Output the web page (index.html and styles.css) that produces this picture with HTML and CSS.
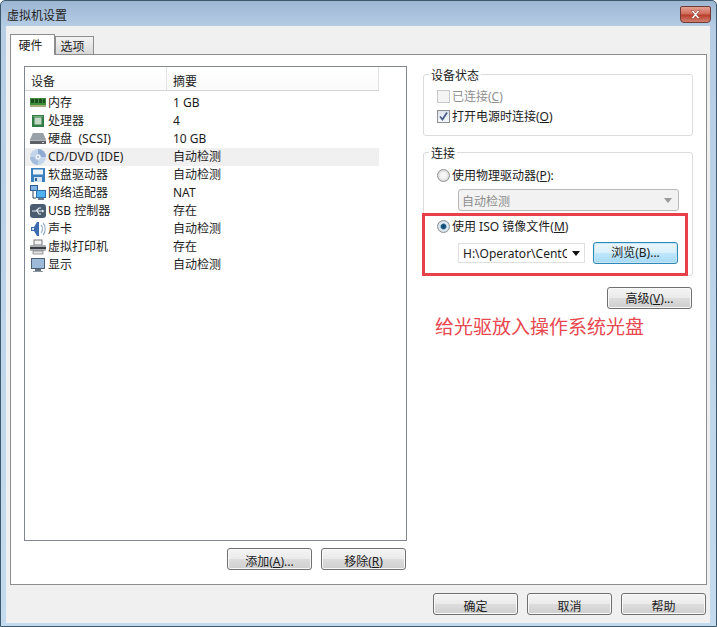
FILE: index.html
```html
<!DOCTYPE html>
<html lang="zh">
<head>
<meta charset="utf-8">
<title>虚拟机设置</title>
<link rel="stylesheet" href="styles.css">
</head>
<body>
<div class="window">
  <header class="titlebar">
    <span class="title">虚拟机设置</span>
    <button class="close" aria-label="关闭"><svg width="13" height="11" viewBox="0 0 13 11"><path d="M2 1.500h2.500L6.500 4l2-2.500H11L7.800 5.500 11 9.500H8.500l-2-2.500-2 2.500H2l3.200-4z" fill="#fff" stroke="#8a3a30" stroke-width=".6"/></svg></button>
  </header>
  <div class="client">
    <div class="tabs">
      <div class="tab active">硬件</div>
      <div class="tab">选项</div>
    </div>
    <main class="panel">
      <section class="left">
        <div class="list">
          <div class="list-head"><span class="c1">设备</span><span class="c2">摘要</span></div>
          <div class="row"><span class="ico"><svg width="16" height="16" viewBox="0 0 16 16"><rect x="0" y="3" width="16" height="7" fill="#3f8f3a"/><rect x="1" y="4" width="3" height="4" fill="#1f4d22"/><rect x="5" y="4" width="3" height="4" fill="#1f4d22"/><rect x="9" y="4" width="3" height="4" fill="#1f4d22"/><rect x="13" y="4" width="2" height="4" fill="#1f4d22"/><rect x="0" y="10" width="16" height="2" fill="#a8ad7c"/></svg></span><span class="name">内存</span><span class="val">1 GB</span></div>
          <div class="row"><span class="ico"><svg width="16" height="16" viewBox="0 0 16 16"><rect x="2" y="2" width="12" height="12" fill="#2f7d46"/><rect x="4.500" y="4.500" width="7" height="7" fill="#c4d8c4"/><path d="M3 3h10v1H3z" fill="#6fae78"/></svg></span><span class="name">处理器</span><span class="val">4</span></div>
          <div class="row"><span class="ico"><svg width="16" height="16" viewBox="0 0 16 16"><path d="M3 2h10l3 7v4H0V9z" fill="#b4b8bd"/><path d="M3 2h10l3 7H0z" fill="#9aa0a7"/><rect x="0" y="10" width="16" height="3" fill="#5c6066"/><rect x="12" y="11" width="2" height="1" fill="#cfd3d6"/></svg></span><span class="name spaced">硬盘 (SCSI)</span><span class="val">10 GB</span></div>
          <div class="row selected"><span class="ico"><svg width="16" height="16" viewBox="0 0 16 16"><circle cx="8" cy="8" r="8" fill="#c3d5ea"/><path d="M8 0A8 8 0 0 1 16 8H11A3 3 0 0 0 8 5z" fill="#8fabd2"/><path d="M8 16A8 8 0 0 1 0 8H5A3 3 0 0 0 8 11z" fill="#a6bddb"/><circle cx="8" cy="8" r="2.500" fill="#eef4fa"/><circle cx="8" cy="8" r="1" fill="#9fb2ca"/></svg></span><span class="name">CD/DVD (IDE)</span><span class="val">自动检测</span></div>
          <div class="row"><span class="ico"><svg width="16" height="16" viewBox="0 0 16 16"><rect x="1" y="1" width="14" height="14" fill="#3a80c0"/><rect x="3" y="2.500" width="10" height="5" fill="#eaf2fa"/><rect x="4" y="10" width="8" height="5" fill="#d5e2f0"/><rect x="5" y="11" width="2" height="3" fill="#2f5f90"/></svg></span><span class="name">软盘驱动器</span><span class="val">自动检测</span></div>
          <div class="row"><span class="ico"><svg width="16" height="16" viewBox="0 0 16 16"><rect x="0" y="0" width="8" height="6" fill="#2d5a8a"/><rect x="1" y="1" width="6" height="4" fill="#7fb4e6"/><path d="M3 6v7h3" fill="none" stroke="#33465c"/><rect x="6" y="5" width="10" height="8" fill="#2f6ea8"/><rect x="7" y="6" width="8" height="6" fill="#4fb2ee"/><rect x="8" y="13" width="6" height="2" fill="#6c7c8c"/></svg></span><span class="name">网络适配器</span><span class="val">NAT</span></div>
          <div class="row"><span class="ico"><svg width="16" height="16" viewBox="0 0 16 16"><rect x="0" y="1" width="16" height="14" rx="3" fill="#4a5c70"/><path d="M2 8h11M6 8l3-3h2M7 8l2 3h2" fill="none" stroke="#e8eef4" stroke-width="1.200"/><path d="M12 6.500l2.500 1.500L12 9.500z" fill="#e8eef4"/></svg></span><span class="name">USB 控制器</span><span class="val">存在</span></div>
          <div class="row"><span class="ico"><svg width="16" height="16" viewBox="0 0 16 16"><path d="M1 6h3l3-5h2v14H7L4 10H1z" fill="#3d6db0"/><path d="M2 7h2v2H2z" fill="#cfe0f3"/><path d="M11 4c2 2 2 6 0 8M13 2c3 3 3 9 0 12" fill="none" stroke="#8fa9c8" stroke-width="1.100"/></svg></span><span class="name">声卡</span><span class="val">自动检测</span></div>
          <div class="row"><span class="ico"><svg width="16" height="16" viewBox="0 0 16 16"><rect x="4" y="1" width="8" height="5" fill="#f4f4f4" stroke="#777"/><rect x="0" y="6" width="16" height="6" rx="1" fill="#a9acb0"/><rect x="0" y="8" width="16" height="2" fill="#3a3d42"/><rect x="3" y="12" width="10" height="3" fill="#e2e2e2" stroke="#777" stroke-width=".7"/></svg></span><span class="name">虚拟打印机</span><span class="val">存在</span></div>
          <div class="row"><span class="ico"><svg width="16" height="16" viewBox="0 0 16 16"><rect x="1" y="1" width="14" height="11" fill="#4d6178"/><rect x="2" y="2" width="12" height="9" fill="#9dbbd8"/><rect x="5" y="12" width="6" height="2" fill="#63707e"/><rect x="3" y="14" width="10" height="1" fill="#8a96a2"/></svg></span><span class="name">显示</span><span class="val">自动检测</span></div>
        </div>
        <div class="list-actions">
          <button class="btn">添加(<u>A</u>)...</button>
          <button class="btn">移除(<u>R</u>)</button>
        </div>
      </section>
      <section class="right">
        <fieldset class="group status">
          <legend>设备状态</legend>
          <div class="check disabled"><span class="box"></span>已连接(<u>C</u>)</div>
          <div class="check"><span class="box on"><svg width="11" height="11" viewBox="0 0 11 11"><path d="M2 5.500l2.500 3L9 1.500" fill="none" stroke="#4a5f85" stroke-width="1.800"/></svg></span>打开电源时连接(<u>O</u>)</div>
        </fieldset>
        <fieldset class="group connect">
          <legend>连接</legend>
          <div class="radio-row first"><span class="radio"></span>使用物理驱动器(<u>P</u>):</div>
          <div class="select disabled"><span>自动检测</span><i class="caret"></i></div>
          <div class="radio-row iso"><span class="radio on"></span>使用 ISO 镜像文件(<u>M</u>)</div>
          <div class="iso-row">
            <div class="select path"><span class="path-text">H:\Operator\CentOS</span><i class="caret"></i></div>
            <button class="btn focus">浏览(B)...</button>
          </div>
          <div class="redbox"></div>
        </fieldset>
        <div class="adv"><button class="btn">高级(<u>V</u>)...</button></div>
        <p class="note">给光驱放入操作系统光盘</p>
      </section>
    </main>
    <footer class="footer">
      <button class="btn">确定</button>
      <button class="btn">取消</button>
      <button class="btn">帮助</button>
    </footer>
  </div>
</div>
</body>
</html>
```
FILE: styles.css
```css
* { box-sizing: border-box; }
html, body { margin: 0; padding: 0; }
body {
  width: 717px;
  height: 627px;
  overflow: hidden;
  font-family: "Noto Sans CJK SC", sans-serif;
  font-size: 12px;
  color: #1c1c1c;
}
button { font: inherit; color: inherit; }
.window {
  width: 717px;
  height: 627px;
  display: flex;
  flex-direction: column;
  background: linear-gradient(#9db6d2 0, #b6cde5 26px, #c4dbef 100%);
  border: 1px solid #3c5a6c;
  border-radius: 5px 5px 0 0;
}
.titlebar {
  height: 25px;
  display: flex;
  justify-content: space-between;
  padding: 0 5px 0 6px;
  flex: none;
}
.title { line-height: 28px; color: #222; }
.close {
  width: 31px;
  height: 17px;
  margin-top: 5px;
  padding: 0;
  border: 1px solid #6e3a34;
  border-radius: 2px 2px 4px 4px;
  background: linear-gradient(#e6a091, #cf6a58 48%, #b83a2a 52%, #d2806e);
  display: flex;
  align-items: center;
  justify-content: center;
}
.client {
  flex: 1;
  margin: 0 6px 3px 5px;
  background: #f0f0f0;
  padding: 8px 3px 0 4px;
  display: flex;
  flex-direction: column;
}
.tabs {
  display: flex;
  align-items: flex-end;
  height: 20px;
  flex: none;
}
.tab {
  width: 39px;
  height: 18px;
  margin-left: -1px;
  padding-right: 4px;
  border: 1px solid #8d8d8d;
  border-bottom: 0;
  background: linear-gradient(#f4f4f4, #d8d8d8);
  text-align: center;
  line-height: 18px;
}
.tab.active {
  width: 45px;
  height: 21px;
  margin-left: 0;
  margin-bottom: -1px;
  margin-right: 1px;
  background: #fff;
  position: relative;
  z-index: 1;
  line-height: 20px;
}
.panel {
  height: 531px;
  background: #fff;
  border: 1px solid #8d8d8d;
  padding: 11px 12px 0 13px;
  display: flex;
  gap: 16px;
  flex: none;
}
.left { width: 383px; flex: none; }
.list {
  height: 475px;
  border: 1px solid #828790;
}
.list-head {
  height: 24px;
  width: 354px;
  display: flex;
  align-items: center;
  border-bottom: 1px solid #d5d5d5;
  border-right: 1px solid #e3e3e3;
  margin-bottom: 3px;
  background: linear-gradient(#fff, #fafafa);
}
.c1 { width: 142px; height: 100%; padding-left: 6px; border-right: 1px solid #e3e3e3; line-height: 27px; }
.c2 { padding-left: 6px; height: 100%; line-height: 27px; }
.row {
  height: 18px;
  width: 354px;
  display: flex;
  align-items: center;
  padding-left: 5px;
  line-height: 18px;
  font-family: "Noto Sans", "Noto Sans CJK SC", sans-serif;
}
.row.selected { background: #f0f0f0; }
.ico { width: 16px; height: 16px; flex: none; margin-right: 2px; display: block; }
.ico svg { display: block; }
.name { width: 125px; flex: none; }
.name.spaced { word-spacing: 3px; letter-spacing: .1px; }
.val { white-space: nowrap; }
.list-actions {
  display: flex;
  justify-content: flex-end;
  gap: 9px;
  margin-top: 7px;
  padding-right: 1px;
}
.btn {
  width: 85px;
  height: 22px;
  padding: 2px 0 0;
  border: 1px solid #707070;
  border-radius: 3px;
  background: linear-gradient(#f4f4f4 0, #ebebeb 48%, #dcdcdc 52%, #cfcfcf 100%);
  font-family: "Noto Sans", "Noto Sans CJK SC", sans-serif;
  line-height: 18px;
  box-shadow: inset 0 0 0 1px #f8f8f8;
}
.list-actions .btn, .footer .btn { padding-top: 4px; }
.right { width: 270px; flex: none; }
.group {
  position: relative;
  margin: 0;
  padding: 0;
  border: 1px solid #dcdcdc;
  border-radius: 3px;
  width: 270px;
}
.group legend {
  margin-left: -8px;
  padding: 2px 2px 0;
  line-height: 16px;
  font-size: 12px;
}
.status { height: 71px; margin-top: -1px; padding: 3px 0 0 13px; }
.check {
  height: 20px;
  display: flex;
  align-items: center;
  font-family: "Noto Sans", "Noto Sans CJK SC", sans-serif;
}
.check.disabled { color: #8f8f8f; }
.box {
  width: 13px;
  height: 13px;
  margin-right: 2px;
  border: 1px solid #8e8f8f;
  background: linear-gradient(#e8e8e8, #f8f8f8);
  display: flex;
  align-items: center;
  justify-content: center;
}
.check.disabled .box { border-color: #c8c8c8; background: #f4f4f4; }
.box.on { background: linear-gradient(#dde3ee, #f4f6fb); }
.connect {
  height: 133px;
  margin-top: 7px;
  padding: 0 0 0 13px;
}
.radio-row {
  height: 20px;
  margin-top: 5px;
  display: flex;
  align-items: center;
  font-family: "Noto Sans", "Noto Sans CJK SC", sans-serif;
}
.radio-row.first { margin-top: 4px; }
.radio {
  width: 13px;
  height: 13px;
  margin-right: 2px;
  border: 1px solid #8e8f8f;
  border-radius: 50%;
  background: radial-gradient(circle, #f6f6f6 30%, #c9c9c9);
}
.radio.on { background: radial-gradient(circle, #123f63 0, #1d5f8c 30%, #e4eef6 45%, #b6c6d4); }
.select {
  height: 22px;
  width: 221px;
  margin: 4px 0 0 21px;
  padding: 0 6px 0 3px;
  border: 1px solid #b8b8b8;
  border-radius: 3px;
  display: flex;
  justify-content: space-between;
  align-items: center;
}
.select.disabled { background: #f2f2f2; color: #8d8d8d; }
.caret {
  width: 0;
  height: 0;
  border: 4px solid transparent;
  border-top: 5px solid #9a9a9a;
  border-bottom: 0;
}
.iso-row {
  display: flex;
  align-items: center;
  gap: 8px;
  margin: 6px 0 0 21px;
}
.select.path {
  margin: 0;
  width: 127px;
  height: 20px;
  border-radius: 0;
  border-color: #e0e0e0;
  padding: 0 4px;
  overflow: hidden;
  font-family: "Noto Sans", sans-serif;
}
.path-text { width: 104px; overflow: hidden; white-space: nowrap; flex: none; }
.select.path .caret { border-top-color: #111; flex: none; }
.btn.focus {
  padding-top: 0;
  border-color: #2f88b8;
  background: linear-gradient(#eaf6fd 0, #d9f0fc 48%, #bee6fd 52%, #a7d9f5 100%);
  box-shadow: inset 0 0 0 1px #c6e6f6;
}
.redbox {
  position: absolute;
  left: -2px;
  top: 52px;
  width: 266px;
  height: 63px;
  border: 3px solid #e8404a;
  pointer-events: none;
}
.adv {
  display: flex;
  justify-content: flex-end;
  margin-top: 11px;
  padding-right: 1px;
}
.note {
  margin: 5px 0 0 12px;
  color: #e8474f;
  font-size: 19px;
  line-height: 24px;
  white-space: nowrap;
}
.footer {
  flex: 1;
  display: flex;
  justify-content: flex-end;
  gap: 9px;
  padding: 8px 1px 0 0;
}
```
